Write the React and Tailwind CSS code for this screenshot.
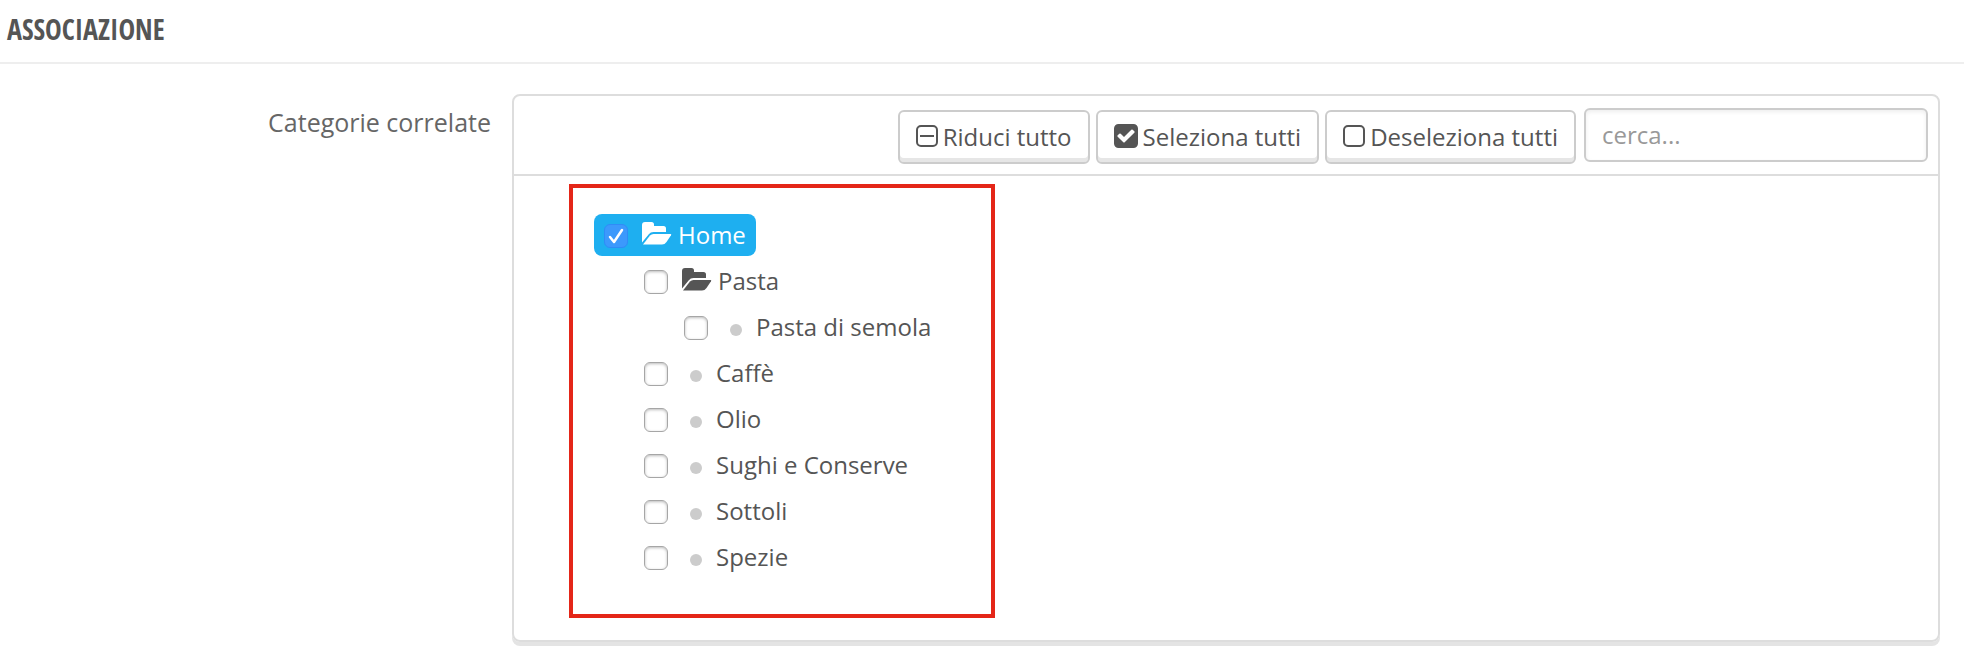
import { useState } from 'react';

const categories = [
  { name: 'Home', level: 0, folder: true },
  { name: 'Pasta', level: 1, folder: true },
  { name: 'Pasta di semola', level: 2 },
  { name: 'Caffè', level: 1 },
  { name: 'Olio', level: 1 },
  { name: 'Sughi e Conserve', level: 1 },
  { name: 'Sottoli', level: 1 },
  { name: 'Spezie', level: 1 },
];

const indents = ['', 'ml-10', 'ml-20'];

const FolderIcon = () => (
  <svg className="h-[23px] w-[30px] shrink-0" viewBox="0 0 30 23" fill="currentColor" aria-hidden="true">
    <path d="M0 3Q0 0 3 0H9.500Q12 0 12 2.500V4H21.500Q24 4 24 6.500V10H11.500Q8.500 10 6.800 12.200L0 20.500Z" />
    <path d="M1 22.500L8 13.600Q9.500 12 11.500 12H28.500Q29.800 12 29 13.300L24.500 20Q22.800 22.500 20 22.500Z" />
  </svg>
);

const SquareIcon = ({ minus }) => (
  <svg className="h-[22px] w-[22px]" viewBox="0 0 22 22" fill="none" stroke="currentColor" strokeWidth="2" aria-hidden="true">
    <rect x="1" y="1" width="20" height="20" rx="4" />
    {minus && <path d="M4 11h14" />}
  </svg>
);

const CheckSquareIcon = () => (
  <svg className="h-6 w-6" viewBox="128 128 1536 1536" fill="currentColor" aria-hidden="true">
    <path d="M813 1299l614-614q19-19 19-45t-19-45l-102-102q-19-19-45-19t-45 19l-467 467-211-211q-19-19-45-19t-45 19l-102 102q-19 19-19 45t19 45l358 358q19 19 45 19t45-19zm851-883v960q0 119-84.5 203.5t-203.5 84.5h-960q-119 0-203.5-84.5t-84.5-203.5v-960q0-119 84.5-203.5t203.5-84.5h960q119 0 203.5 84.5t84.5 203.5z" />
  </svg>
);

const ToolButton = ({ icon, children, onClick }) => (
  <button
    type="button"
    onClick={onClick}
    className="flex h-[54px] items-center gap-[5px] whitespace-nowrap rounded-md border-2 border-[#ccc] bg-white px-4 shadow-[inset_0_-4px_0_#e6e6e6]"
  >
    <span className="pb-0.5">{icon}</span>
    {children}
  </button>
);

const CategoryRow = ({ category, checked, onChange }) => (
  <li className={indents[category.level]}>
    <label className={`flex h-[42px] w-fit items-center rounded-lg px-2.5 ${checked ? 'bg-[#1eaff0] text-white' : ''}`}>
      <span className="mt-0.5 grid h-6 w-6 shrink-0">
        <input
          type="checkbox"
          checked={checked}
          onChange={onChange}
          className="col-start-1 row-start-1 h-6 w-6 appearance-none rounded-md border border-[#a6a6a6] bg-white shadow-[inset_0_1px_3px_#bbb] checked:border-[#2f8cf7] checked:bg-[#3c99fc] checked:shadow-none"
        />
        {checked && (
          <svg className="pointer-events-none col-start-1 row-start-1 h-6 w-6" viewBox="0 0 24 24" fill="none" stroke="#fff" strokeWidth="2.5" strokeLinecap="round" strokeLinejoin="round" aria-hidden="true">
            <path d="M6 13l4 5 8-12" />
          </svg>
        )}
      </span>
      {category.folder ? (
        <span className="mb-1 ml-3.5 mr-1.5">
          <FolderIcon />
        </span>
      ) : (
        <span className="ml-[22px] mr-3.5 mt-1.5 h-3 w-3 rounded-full bg-[#ccc]" />
      )}
      {category.name}
    </label>
  </li>
);

const App = () => {
  const [selected, setSelected] = useState(['Home']);
  const [collapsed, setCollapsed] = useState(false);
  const [search, setSearch] = useState('');

  const toggle = (name) => {
    setSelected(selected.includes(name) ? selected.filter((n) => n !== name) : [...selected, name]);
  };

  const visible = categories.filter(
    (c) => (!collapsed || c.level === 0) && c.name.toLowerCase().includes(search.toLowerCase())
  );

  return (
    <div className="min-h-screen bg-white font-['Open_Sans','Noto_Sans',sans-serif] text-2xl text-[#555]">
      <h3 className="flex h-16 items-center border-b-2 border-[#eee] px-[7px] pb-0.5 font-['Ubuntu_Condensed','Open_Sans_Condensed','Roboto_Condensed',sans-serif] text-[28px] font-normal uppercase">
        Associazione
      </h3>
      <div className="flex items-start pt-[30px]">
        <label htmlFor="category-search" className="w-1/4 shrink-0 pt-2.5 text-right text-[25px] leading-9 text-[#666]">
          Categorie correlate
        </label>
        <div className="ml-[21px] mr-6 min-w-0 flex-1 rounded-lg border-2 border-[#ddd] shadow-[0_4px_0_#e4e4e4]">
          <div className="flex items-start justify-end gap-2 border-b-2 border-[#ddd] px-2.5 pb-2.5 pt-3">
            <div className="flex gap-1.5 pt-0.5">
              <ToolButton icon={<SquareIcon minus />} onClick={() => setCollapsed(!collapsed)}>
                Riduci tutto
              </ToolButton>
              <ToolButton icon={<CheckSquareIcon />} onClick={() => setSelected(categories.map((c) => c.name))}>
                Seleziona tutti
              </ToolButton>
              <ToolButton icon={<SquareIcon />} onClick={() => setSelected([])}>
                Deseleziona tutti
              </ToolButton>
            </div>
            <input
              id="category-search"
              type="text"
              placeholder="cerca..."
              value={search}
              onChange={(e) => setSearch(e.target.value)}
              className="h-[54px] w-[344px] rounded-md border-2 border-[#ccc] bg-white px-4 pb-0.5 shadow-[inset_0_2px_4px_#eee] placeholder:text-[#999]"
            />
          </div>
          <div className="mb-[22px] ml-[55px] mt-2 w-[426px] border-4 border-[#e42618] pb-9 pl-[21px] pt-[26px]">
            <ul className="flex flex-col gap-1">
              {visible.map((c) => (
                <CategoryRow key={c.name} category={c} checked={selected.includes(c.name)} onChange={() => toggle(c.name)} />
              ))}
            </ul>
          </div>
        </div>
      </div>
    </div>
  );
};

export default App;
